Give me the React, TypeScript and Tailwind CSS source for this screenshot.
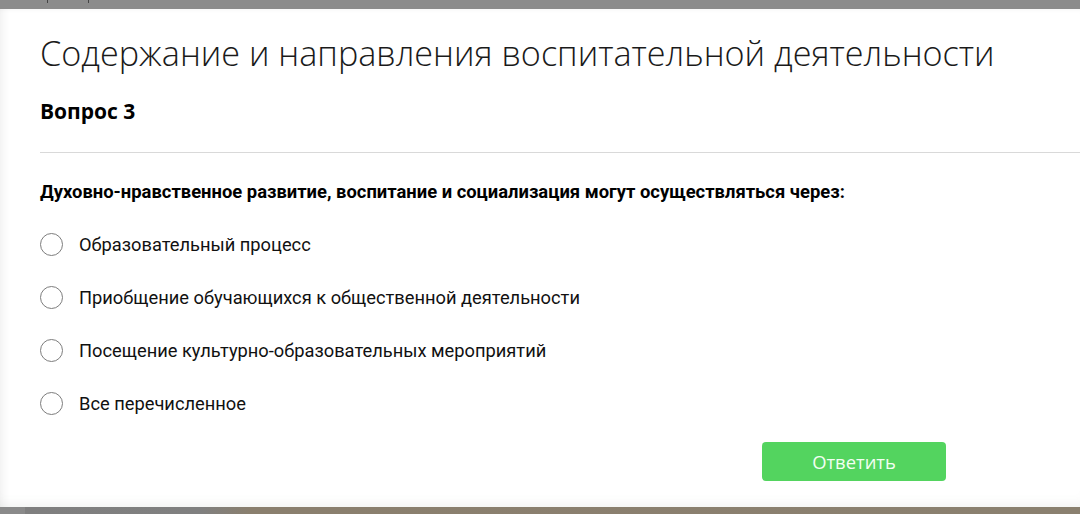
const options = [
  'Образовательный процесс',
  'Приобщение обучающихся к общественной деятельности',
  'Посещение культурно-образовательных мероприятий',
  'Все перечисленное',
];

export default function App() {
  return (
    <div className="w-[1080px] h-[514px] overflow-hidden flex flex-col bg-[#8c8c8c]">
      {/* top bar with cut-off text from the page behind */}
      <div className="h-[9px] shrink-0 flex items-start">
        <div className="ml-[47px] w-[1px] h-[3px] bg-[#444]" />
        <div className="ml-[40px] w-[1px] h-[3px] bg-[#444]" />
      </div>

      <div className="flex-1 bg-white shadow-[inset_10px_0_10px_-8px_rgba(0,0,0,0.07),inset_0_-12px_12px_-10px_rgba(120,140,120,0.12),inset_0_4px_4px_-3px_rgba(0,0,0,0.04)] pl-10 pt-[22px]">
        <h1 className="font-['Open_Sans',sans-serif] font-light text-[34.2px] leading-[44px] text-[#1a1a1a] whitespace-nowrap">
          Содержание и направления воспитательной деятельности
        </h1>
        <h2 className="mt-[22px] font-['Open_Sans',sans-serif] font-bold text-[21px] leading-[28px] text-black">
          Вопрос 3
        </h2>
        <div className="mt-[27px] border-t border-[#d9d9d9]" />
        <p className="mt-[27px] font-['Roboto',sans-serif] font-bold text-[18.4px] leading-[24px] text-black whitespace-nowrap">
          Духовно-нравственное развитие, воспитание и социализация могут осуществляться через:
        </p>
        <div className="mt-[14px] flex flex-col">
          {options.map((o) => (
            <label key={o} className="h-[53px] flex items-center">
              <span className="w-[23px] h-[23px] rounded-full border-[1.5px] border-[#7d7d7d] bg-white" />
              <span className="ml-[16px] font-['Roboto',sans-serif] text-[18.3px] text-[#111]">{o}</span>
            </label>
          ))}
        </div>
        <div className="mt-[12px] flex">
          <button className="ml-[722px] w-[184px] h-[39px] rounded-[4px] bg-[#53d45f] text-[#f2fff2] font-['Open_Sans',sans-serif] text-[18.4px]">
            Ответить
          </button>
        </div>
      </div>

      <div className="h-[7px] shrink-0 bg-[linear-gradient(90deg,#8a8a8a_0px,#8a8a8a_25px,#7f7f7f_25px,#808080_200px,#8a7f6e_250px,#8a806f_100%)]" />
    </div>
  );
}
